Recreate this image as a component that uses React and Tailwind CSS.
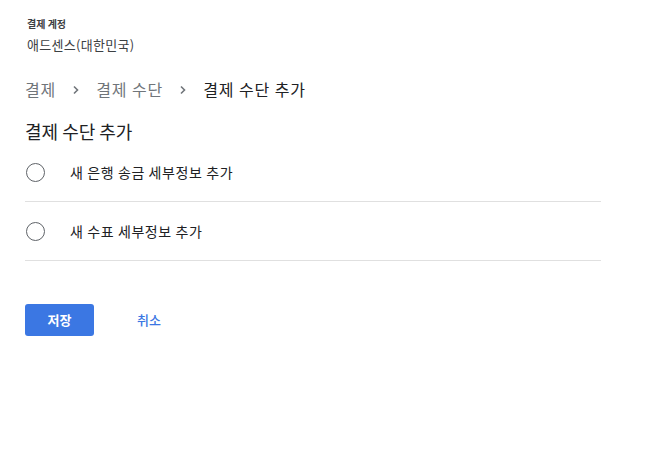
import React from 'react';

const Chevron = () => (
  <svg className="mx-[16px] mt-[1px]" width="8" height="10" viewBox="0 0 8 10">
    <path d="M2 1.5 L5.5 5 L2 8.5" fill="none" stroke="#70757a" strokeWidth="1.6" />
  </svg>
);

const Option = ({ label }) => (
  <label className="flex items-center h-[59px] border-b border-[#e0e0e0] cursor-pointer">
    <span className="w-[19px] h-[19px] ml-[1px] rounded-full border-[1.5px] border-[#5f6368] shrink-0" />
    <span className="ml-[25px] text-[14px] tracking-[0.6px] text-[#202124]">{label}</span>
  </label>
);

export default function App() {
  return (
    <div className="w-[671px] h-[455px] bg-white font-['Noto_Sans_CJK_KR',sans-serif]">
      <div className="pl-[25px] pt-[17px] w-[601px]">
        <div className="ml-[2px] text-[10px] leading-[14px] font-bold text-[#3c4043]">결제 계정</div>
        <div className="ml-[2px] mt-[5px] text-[13px] leading-[18px] tracking-[0.3px] text-[#3c4043]">애드센스(대한민국)</div>

        <div className="flex items-center mt-[24px] text-[16px] leading-[22px] tracking-[0.9px] text-[#70757a]">
          <span>결제</span>
          <Chevron />
          <span>결제 수단</span>
          <Chevron />
          <span className="text-[#202124]">결제 수단 추가</span>
        </div>

        <h1 className="mt-[19px] text-[18px] leading-[24px] text-[#202124]">결제 수단 추가</h1>

        <div>
          <Option label="새 은행 송금 세부정보 추가" />
          <Option label="새 수표 세부정보 추가" />
        </div>

        <div className="flex items-center mt-[43px]">
          <button className="w-[69px] h-[32px] rounded-[3px] bg-[#3b77e3] text-white text-[13px] font-bold">저장</button>
          <button className="ml-[43px] text-[13px] text-[#3b77e3] font-medium">취소</button>
        </div>
      </div>
    </div>
  );
}
